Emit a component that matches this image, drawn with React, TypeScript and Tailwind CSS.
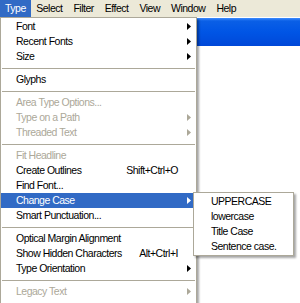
import React from "react";

type Item =
  | { kind: "sep" }
  | { kind: "item"; label: string; disabled?: boolean; arrow?: boolean; shortcut?: string; active?: boolean };

const items: Item[] = [
  { kind: "item", label: "Font", arrow: true },
  { kind: "item", label: "Recent Fonts", arrow: true },
  { kind: "item", label: "Size", arrow: true },
  { kind: "sep" },
  { kind: "item", label: "Glyphs" },
  { kind: "sep" },
  { kind: "item", label: "Area Type Options...", disabled: true },
  { kind: "item", label: "Type on a Path", disabled: true, arrow: true },
  { kind: "item", label: "Threaded Text", disabled: true, arrow: true },
  { kind: "sep" },
  { kind: "item", label: "Fit Headline", disabled: true },
  { kind: "item", label: "Create Outlines", shortcut: "Shift+Ctrl+O" },
  { kind: "item", label: "Find Font..." },
  { kind: "item", label: "Change Case", arrow: true, active: true },
  { kind: "item", label: "Smart Punctuation..." },
  { kind: "sep" },
  { kind: "item", label: "Optical Margin Alignment" },
  { kind: "item", label: "Show Hidden Characters", shortcut: "Alt+Ctrl+I" },
  { kind: "item", label: "Type Orientation", arrow: true },
  { kind: "sep" },
  { kind: "item", label: "Legacy Text", disabled: true, arrow: true },
];

const menubar = ["Type", "Select", "Filter", "Effect", "View", "Window", "Help"];

function Arrow({ color }: { color: string }) {
  return (
    <svg width="4" height="7" viewBox="0 0 4 7" className="block">
      <path d="M0 0 L4 3.5 L0 7 Z" fill={color} />
    </svg>
  );
}

export default function App() {
  return (
    <div
      className="relative w-[300px] h-[303px] overflow-hidden bg-white text-[10.5px] tracking-[-0.5px] leading-none text-black"
      style={{ fontFamily: '"Liberation Sans", Arial, sans-serif' }}
    >
      <div className="flex h-[17px] bg-[#ece9d8] items-stretch">
        {menubar.map((m, i) => (
          <div
            key={m}
            className={
              i === 0
                ? "flex items-center px-[5px] bg-[#316ac5] text-white"
                : "flex items-center px-[5.5px]"
            }
          >
            {m}
          </div>
        ))}
      </div>
      <div className="flex">
        <div className="w-[197px] h-[300px] shrink-0 bg-white border border-[#aca899] pt-[1px] shadow-[2px_2px_2px_rgba(0,0,0,0.35)] z-10">
          {items.map((it, idx) =>
            it.kind === "sep" ? (
              <div key={idx} className="h-[8px] flex items-center px-[1px]">
                <div className="h-px w-full bg-[#aca899]" />
              </div>
            ) : (
              <div
                key={idx}
                className={
                  "h-[15px] flex items-center pl-[15px] pr-[5px] " +
                  (it.active ? "bg-[#316ac5] text-white" : it.disabled ? "text-[#aca899]" : "text-black")
                }
              >
                <span className="flex-1 whitespace-nowrap">{it.label}</span>
                {it.shortcut && <span className="whitespace-nowrap mr-[13px]">{it.shortcut}</span>}
                {it.arrow && (
                  <Arrow color={it.active ? "#ffffff" : it.disabled ? "#aca899" : "#000000"} />
                )}
              </div>
            )
          )}
        </div>
        <div className="flex-1 flex flex-col">
          <div className="h-px bg-white" />
          <div className="h-[28px] bg-[linear-gradient(to_bottom,#3d8cff_0px,#0a5fe6_3px,#0055e5_50%,#0048d8_100%)]" />
          <div className="flex-1 bg-white" />
        </div>
      </div>
      <div className="absolute left-[193px] top-[192px] w-[101px] h-[64px] bg-white border border-[#aca899] py-[1px] shadow-[2px_2px_2px_rgba(0,0,0,0.35)] z-20">
        {["UPPERCASE", "lowercase", "Title Case", "Sentence case."].map((s) => (
          <div key={s} className="h-[15px] flex items-center pl-[17px] whitespace-nowrap">
            {s}
          </div>
        ))}
      </div>
    </div>
  );
}
